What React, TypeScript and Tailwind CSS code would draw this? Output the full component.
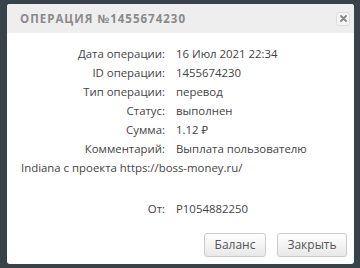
import React from 'react';

const rows: [string, string][] = [
  ['Дата операции:', '16 Июл 2021 22:34'],
  ['ID операции:', '1455674230'],
  ['Тип операции:', 'перевод'],
  ['Статус:', 'выполнен'],
  ['Сумма:', '1.12 ₽'],
  ['Комментарий:', 'Выплата пользователю'],
];

const font = { fontFamily: '"Open Sans", "Noto Sans", sans-serif' };

export default function App() {
  return (
    <div className="w-[360px] h-[268px] bg-[#384349] pt-[4px] pl-[7px] pr-[6px] pb-[4px]" style={font}>
      <div className="h-full bg-white rounded-[3px] flex flex-col overflow-hidden">
        {/* header */}
        <div className="h-[29px] bg-[#eeeeee] flex items-center justify-between pl-[13px] pr-[4px]">
          <span className="text-[11.5px] font-bold tracking-[1px] text-[#8a8a8a]">ОПЕРАЦИЯ №1455674230</span>
          <button className="w-[14px] h-[14px] rounded-[3px] border border-[#dddddd] bg-[#f4f4f4] flex items-center justify-center">
            <svg width="7" height="7" viewBox="0 0 7 7">
              <path d="M1 1L6 6M6 1L1 6" stroke="#888" strokeWidth="1.8" strokeLinecap="round" />
            </svg>
          </button>
        </div>

        {/* details */}
        <div className="pt-[11px] pl-[14px] text-[11.4px] text-[#444] leading-[19px]">
          {rows.map(([label, value]) => (
            <div key={label} className="flex">
              <span className="w-[144px] text-right">{label}</span>
              <span className="ml-[11px]">{value}</span>
            </div>
          ))}
          <div>Indiana с проекта https://boss-money.ru/</div>
          <div className="mt-[22px] flex">
            <span className="w-[144px] text-right">От:</span>
            <span className="ml-[11px]">P1054882250</span>
          </div>
        </div>

        <div className="mt-auto mb-[7px] flex justify-end gap-[11px] pr-[7px]">
          <button className="w-[62px] h-[24px] rounded-[3px] border border-[#cccccc] bg-gradient-to-b from-white to-[#e8e8e8] text-[12px] text-[#555]">
            Баланс
          </button>
          <button className="w-[70px] h-[24px] rounded-[3px] border border-[#cccccc] bg-gradient-to-b from-white to-[#e8e8e8] text-[12px] text-[#555]">
            Закрыть
          </button>
        </div>
      </div>
    </div>
  );
}
